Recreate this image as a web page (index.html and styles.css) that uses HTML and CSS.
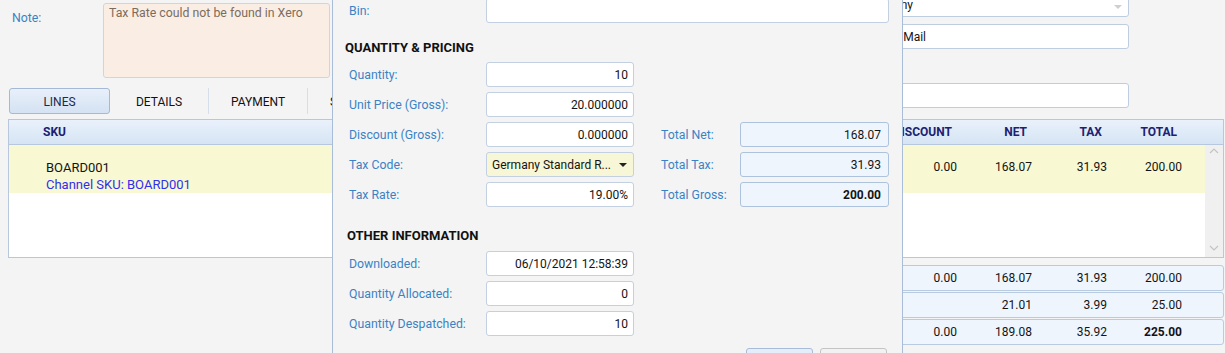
FILE: index.html
```html
<!DOCTYPE html>
<html lang="en">
<head>
    <meta charset="UTF-8">
    <meta name="viewport" content="width=device-width, initial-scale=1.0">
    <title>Order Lines</title>
    <link rel="stylesheet" href="styles.css">
</head>
<body>
    <div class="page">
        <div class="top">
            <div class="left">
                <div class="note-row">
                    <span class="lbl note-lbl">Note:</span>
                    <div class="note">Tax Rate could not be found in Xero</div>
                </div>
                <div class="tabs">
                    <div class="tab active">LINES</div>
                    <div class="tab">DETAILS</div>
                    <div class="tab">PAYMENT</div>
                    <div class="tab">SHIPPING</div>
                </div>
            </div>
            <div class="side">
                <div class="field sel">Germany <span class="caret light"></span></div>
                <div class="field gap1">Royal Mail</div>
                <div class="field gap2"></div>
            </div>
        </div>

        <div class="grid">
            <div class="ghead">
                <div class="sku">SKU</div>
                <div class="num">DISCOUNT</div>
                <div class="num">NET</div>
                <div class="num">TAX</div>
                <div class="num">TOTAL</div>
                <div class="spacer"></div>
            </div>
            <div class="gbody">
                <div class="rows">
                    <div class="row">
                        <div class="sku">
                            <div>BOARD001</div>
                            <div class="channel">Channel SKU: BOARD001</div>
                        </div>
                        <div class="num">0.00</div>
                        <div class="num">168.07</div>
                        <div class="num">31.93</div>
                        <div class="num">200.00</div>
                        <div class="spacer-s"></div>
                    </div>
                </div>
                <div class="scroll">
                    <svg width="10" height="6" viewBox="0 0 10 6"><path d="M1 5 L5 1 L9 5" fill="none" stroke="#c4c4c4" stroke-width="1.2"/></svg>
                    <svg width="10" height="6" viewBox="0 0 10 6"><path d="M1 1 L5 5 L9 1" fill="none" stroke="#c4c4c4" stroke-width="1.2"/></svg>
                </div>
            </div>
        </div>

        <div class="totals">
            <div class="tbox">
                <div class="num">0.00</div>
                <div class="num">168.07</div>
                <div class="num">31.93</div>
                <div class="num">200.00</div>
            </div>
            <div class="tbox">
                <div class="num"></div>
                <div class="num">21.01</div>
                <div class="num">3.99</div>
                <div class="num">25.00</div>
            </div>
            <div class="tbox">
                <div class="num">0.00</div>
                <div class="num">189.08</div>
                <div class="num">35.92</div>
                <div class="num"><b>225.00</b></div>
            </div>
        </div>
    </div>

    <div class="dialog">
        <div class="frow">
            <span class="lbl">Bin:</span>
            <div class="inp wide"></div>
        </div>

        <div class="sec">QUANTITY &amp; PRICING</div>
        <div class="form">
            <div class="frow">
                <span class="lbl">Quantity:</span>
                <div class="inp">10</div>
            </div>
            <div class="frow">
                <span class="lbl">Unit Price (Gross):</span>
                <div class="inp">20.000000</div>
            </div>
            <div class="frow">
                <span class="lbl">Discount (Gross):</span>
                <div class="inp">0.000000</div>
                <span class="lbl tl">Total Net:</span>
                <div class="inp tot">168.07</div>
            </div>
            <div class="frow">
                <span class="lbl">Tax Code:</span>
                <div class="inp combo">Germany Standard R... <span class="caret"></span></div>
                <span class="lbl tl">Total Tax:</span>
                <div class="inp tot">31.93</div>
            </div>
            <div class="frow">
                <span class="lbl">Tax Rate:</span>
                <div class="inp">19.00%</div>
                <span class="lbl tl">Total Gross:</span>
                <div class="inp tot"><b>200.00</b></div>
            </div>
        </div>

        <div class="sec sec2">OTHER INFORMATION</div>
        <div class="form">
            <div class="frow">
                <span class="lbl">Downloaded:</span>
                <div class="inp">06/10/2021 12:58:39</div>
            </div>
            <div class="frow">
                <span class="lbl">Quantity Allocated:</span>
                <div class="inp">0</div>
            </div>
            <div class="frow">
                <span class="lbl">Quantity Despatched:</span>
                <div class="inp">10</div>
            </div>
        </div>

        <div class="buttons">
            <div class="btn primary">Save</div>
            <div class="btn">Cancel</div>
        </div>
    </div>
</body>
</html>
```

FILE: styles.css
```css
body {
    margin: 0;
    height: 353px;
    overflow: hidden;
    position: relative;
    background: #f4f4f4;
    font-family: Roboto, 'Liberation Sans', sans-serif;
    font-size: 12px;
    color: #141414;
}
.lbl {
    color: #3b82c4;
    font-size: 12.3px;
}

/* page behind the dialog */
.top {
    display: flex;
    align-items: flex-start;
}
.left {
    width: 430px;
    padding-top: 3px;
}
.note-row {
    display: flex;
    align-items: flex-start;
}
.note-lbl {
    width: 91px;
    padding: 8px 0 0 12px;
}
.note {
    width: 227px;
    height: 75px;
    box-sizing: border-box;
    padding: 2px 5px;
    background: #faeee4;
    border: 1px solid #ccd6e2;
    border-radius: 3px;
    color: #7b6c5e;
    font-size: 12.3px;
}
.tabs {
    display: flex;
    margin: 10px 0 0 9px;
    height: 26px;
}
.tab {
    width: 99px;
    box-sizing: border-box;
    display: flex;
    align-items: center;
    justify-content: center;
    padding-top: 1px;
    border-right: 1px solid #d6dfe9;
    color: #111;
}
.tab.active {
    width: 101px;
    border: 1px solid #a3b9d6;
    border-radius: 3px;
    background: linear-gradient(#e8f0fa, #d4e2f3);
    color: #1d2b48;
}
.side {
    margin: -8px 96px 0 auto;
    width: 264px;
}
.field {
    height: 25px;
    box-sizing: border-box;
    background: #fff;
    border: 1px solid #bfcde0;
    border-radius: 3px;
    padding-left: 5px;
    display: flex;
    align-items: center;
    position: relative;
}
.field.sel {
    padding-left: 0;
    text-indent: -1px;
}
.gap1 {
    margin-top: 7px;
}
.gap2 {
    margin-top: 34px;
}
.caret {
    position: absolute;
    right: 6px;
    top: 10px;
    width: 0;
    height: 0;
    border-left: 4px solid transparent;
    border-right: 4px solid transparent;
    border-top: 4px solid #222;
}
.caret.light {
    border-top-color: #cfcfcf;
    top: 12px;
}

/* lines grid */
.grid {
    margin: 5px 1px 0 8px;
    border: 1px solid #b7c7dd;
    background: #fff;
}
.ghead {
    display: flex;
    height: 24px;
    align-items: center;
    background: linear-gradient(#e9f1fb, #d6e4f4);
    border-bottom: 1px solid #b7c7dd;
    font-weight: bold;
    color: #1c2172;
}
.ghead .sku {
    flex: 1;
    padding-left: 34px;
}
.ghead .num {
    width: 75px;
    box-sizing: border-box;
    text-align: right;
    padding-right: 15px;
}
.spacer {
    width: 31px;
}
.gbody {
    display: flex;
    height: 112px;
}
.rows {
    flex: 1;
}
.row {
    display: flex;
    height: 48px;
    background: #f8f8d3;
    line-height: 17px;
    box-sizing: border-box;
    padding-top: 14px;
}
.row .sku {
    flex: 1;
    padding-left: 37px;
    font-size: 13px;
}
.channel {
    color: #2f2ff0;
}
.num {
    width: 75px;
    box-sizing: border-box;
    text-align: right;
    padding-right: 10px;
}
.spacer-s {
    width: 13px;
}
.scroll {
    width: 18px;
    background: #f0f0f0;
    display: flex;
    flex-direction: column;
    justify-content: space-between;
    align-items: center;
    padding: 3px 0 6px;
    box-sizing: border-box;
}
.totals {
    width: 520px;
    margin: 7px 1px 0 auto;
}
.tbox {
    display: flex;
    justify-content: flex-end;
    align-items: center;
    height: 26px;
    box-sizing: border-box;
    margin-bottom: 1px;
    padding-right: 31px;
    background: #eef5fd;
    border: 1px solid #b9cbe0;
    border-radius: 3px;
}

/* line dialog */
.dialog {
    position: absolute;
    left: 332px;
    top: -10px;
    width: 571px;
    height: 400px;
    box-sizing: border-box;
    padding: 8px 13px 0 16px;
    background: #f4f4f4;
    border-left: 1px solid #a9bdd8;
    border-right: 1px solid #a9bdd8;
}
.form {
    display: flex;
    flex-direction: column;
    gap: 5px;
}
.frow {
    display: grid;
    grid-template-columns: 137px 148px 27px 79px 149px;
    align-items: center;
    height: 25px;
}
.sec {
    font-weight: bold;
    font-size: 13px;
    line-height: 16px;
    margin: 17px 0 6px -4px;
    color: #111;
}
.sec2 {
    margin: 21px 0 7px -2px;
}
.inp {
    height: 25px;
    box-sizing: border-box;
    background: #fff;
    border: 1px solid #c2d0e2;
    border-radius: 3px;
    padding: 0 5px;
    display: flex;
    align-items: center;
    justify-content: flex-end;
    position: relative;
}
.inp.wide {
    grid-column: 2 / 6;
}
.tl {
    grid-column: 4;
}
.inp.tot {
    background: #eef5fd;
    border-color: #adc2dc;
    padding-right: 7px;
}
.inp.combo {
    background: #f7f7d7;
    justify-content: flex-start;
}
.buttons {
    display: flex;
    justify-content: flex-end;
    gap: 7px;
    margin: 12px 2px 0 0;
}
.btn {
    width: 67px;
    height: 26px;
    box-sizing: border-box;
    border: 1px solid #c4c4c4;
    border-radius: 3px;
    background: #f2f2f2;
    display: flex;
    align-items: center;
    justify-content: center;
}
.btn.primary {
    background: linear-gradient(#e6eef9, #d6e3f3);
    border-color: #a6bcd9;
}
```
